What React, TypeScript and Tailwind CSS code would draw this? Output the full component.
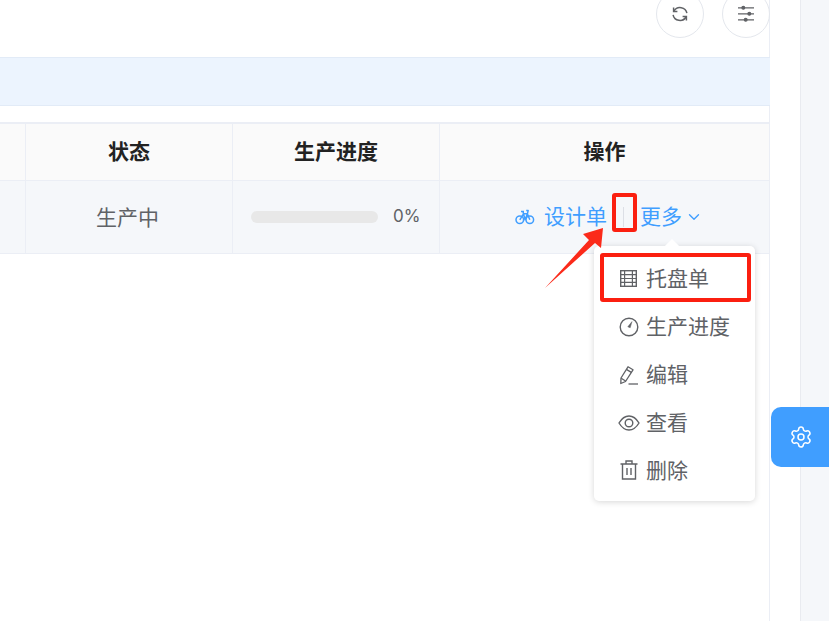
import React from "react";
import { ChevronDown, Settings } from "lucide-react";

const font = { fontFamily: '"Inter","Noto Sans CJK SC",sans-serif' };

function Refresh() {
  return (
    <svg width="18" height="18" viewBox="0 0 18 18" fill="none" stroke="#606266" strokeWidth="1.5">
      <path d="M3 6 A7 7 0 0 1 15.9 8.2" />
      <path d="M2.6 2.6 V6.4 H6.4" />
      <path d="M15 12 A7 7 0 0 1 2.1 9.8" />
      <path d="M15.4 15.4 V11.6 H11.6" />
    </svg>
  );
}
function Sliders() {
  return (
    <svg width="18" height="18" viewBox="0 0 18 18" fill="#606266" stroke="#606266" strokeWidth="1.2">
      <path d="M1 2.8 H17 M1 8.8 H17 M1 14.8 H17" fill="none" />
      <circle cx="6.3" cy="2.8" r="1.4" />
      <circle cx="12.3" cy="8.8" r="1.4" />
      <circle cx="8.7" cy="14.8" r="1.4" />
    </svg>
  );
}
function BikeIcon() {
  return (
    <svg width="20" height="16" viewBox="0 0 20 16" fill="none" stroke="#409eff" strokeWidth="1.5">
      <circle cx="4.8" cy="10.8" r="3.8" />
      <circle cx="14.8" cy="10.8" r="3.8" />
      <path d="M4.8 10.8 L8.5 4.8 L10 10.8 L12.4 4.8 L14.8 10.8 M6 2.6 H9 M8 2.6 L8.5 4.8 M11.2 1.4 H13.2 L12.4 4.8 M8.5 4.8 H12.4" strokeLinejoin="round" />
    </svg>
  );
}
function Gauge() {
  return (
    <svg width="20" height="20" viewBox="0 0 20 20" fill="none" stroke="#606266">
      <circle cx="10" cy="10" r="8.8" strokeWidth="1.4" />
      <path d="M13 4.6 L11.2 10.8 L8.8 9.8 Z" fill="#606266" strokeWidth="0.5" />
    </svg>
  );
}
function Pallet() {
  return (
    <svg width="17" height="17" viewBox="0 0 17 17" fill="none" stroke="#606266" strokeWidth="1.4" className="-mt-[2px]">
      <rect x="0.7" y="0.7" width="15.6" height="15.6" />
      <path d="M4.6 1v15M12.4 1v15M1 4.7h15M1 8.5h15M1 12.3h15" strokeWidth="1.2" />
    </svg>
  );
}
function Pen() {
  return (
    <svg width="18" height="19" viewBox="0 0 18 19" fill="none" stroke="#606266" strokeWidth="1.3">
      <path d="M8 0.8 L13 3.8 L5.5 15.5 L0.8 17.5 L1 12 Z" strokeLinejoin="round" />
      <path d="M6.4 3.4 L11.3 6.4 M1.2 12.2 L5.6 15" />
      <path d="M8.5 18 H18" />
    </svg>
  );
}
function EyeIcon() {
  return (
    <svg width="22" height="16" viewBox="0 0 22 16" fill="none" stroke="#606266" strokeWidth="1.4">
      <path d="M1 8 C4 3 7.5 1 11 1 C14.5 1 18 3 21 8 C18 13 14.5 15 11 15 C7.5 15 4 13 1 8 Z" />
      <circle cx="11" cy="8" r="3.8" />
    </svg>
  );
}
function Trash() {
  return (
    <svg width="18" height="20" viewBox="0 0 18 20" fill="none" stroke="#606266" strokeWidth="1.4" className="-mt-[2px]">
      <path d="M0.5 4 H17.5 M6 4 V1 H12 V4 M2.5 4 V19 H15.5 V4 M7 8 V15 M11 8 V15" />
    </svg>
  );
}

function MenuItem({ icon, label }: { icon: React.ReactNode; label: string }) {
  return (
    <div className="flex h-12 items-center text-[21px] text-[#606266]">
      <span className="flex w-[52px] shrink-0 items-center justify-center pl-[18px] pr-[1px]">{icon}</span>
      <span>{label}</span>
    </div>
  );
}

export default function App() {
  return (
    <div className="relative flex h-[621px] w-[829px] overflow-hidden bg-white" style={font}>
      <main className="flex h-full w-[770px] shrink-0 flex-col border-r border-[#ebeef5]">
        <div className="mt-[-10px] mr-[-1px] flex justify-end gap-[18px]">
          <button className="flex h-12 w-12 items-center justify-center rounded-full border border-[#e4e7ed]">
            <Refresh />
          </button>
          <button className="flex h-12 w-12 items-center justify-center rounded-full border border-[#e4e7ed]">
            <Sliders />
          </button>
        </div>
        <div className="mt-[19px] mr-[-1px] h-[49px] border-y border-[#e2ebf7] bg-[#ecf4fe]" />
        <div className="mt-4 mr-[-1px] border-t-2 border-[#ebeef5]">
          <div className="grid h-[57px] grid-cols-[26px_207px_207px_1fr] border-b border-[#ebeef5] bg-[#fafafa] text-[21px] font-bold text-[#222222]">
            <div className="border-r border-[#ebeef5]" />
            <div className="flex items-center justify-center border-r border-[#ebeef5]">状态</div>
            <div className="flex items-center justify-center border-r border-[#ebeef5]">生产进度</div>
            <div className="flex items-center justify-center border-r border-[#ebeef5]">操作</div>
          </div>
          <div className="grid h-[73px] grid-cols-[26px_207px_207px_1fr] border-b border-[#ebeef5] bg-[#f5f7fa] text-[#606266]">
            <div className="border-r border-[#ebeef5]" />
            <div className="flex items-center justify-center border-r border-[#ebeef5] pr-[3px] pt-px text-[21px]">生产中</div>
            <div className="flex items-center border-r border-[#ebeef5] pl-[18px]">
              <div className="h-3 w-[127px] rounded-full bg-[#e8e8e8]" />
              <span className="ml-[15px] text-[17px]">0%</span>
            </div>
            <div className="flex items-center border-r border-[#ebeef5] pl-[75px] text-[21px] text-[#409eff]">
              <BikeIcon />
              <span className="ml-[9px]">设计单</span>
              <span className="mx-[16px] h-[20px] w-px bg-[#dcdfe6]" />
              <span>更多</span>
              <ChevronDown size={18} strokeWidth={1.8} className="ml-[3px]" />
            </div>
          </div>
        </div>
      </main>
      <div className="w-[30px] shrink-0" />
      <aside className="h-full flex-1 border-l border-[#e9ebf0] bg-[#f5f7fa]" />

      {/* dropdown */}
      <div className="absolute left-[594px] top-[246px] h-[255px] w-[161px] rounded-[5px] bg-white py-[9px] shadow-[0_1px_6px_rgba(0,0,0,0.16)]">
        <div className="absolute left-[73px] top-[-5px] h-[10px] w-[10px] rotate-45 bg-white" />
        <MenuItem icon={<Pallet />} label="托盘单" />
        <MenuItem icon={<Gauge />} label="生产进度" />
        <MenuItem icon={<Pen />} label="编辑" />
        <MenuItem icon={<EyeIcon />} label="查看" />
        <MenuItem icon={<Trash />} label="删除" />
      </div>

      {/* annotations */}
      <div className="absolute left-[612px] top-[193px] h-[39px] w-[25px] rounded-[3px] border-[4px] border-[#fb1f10]" />
      <div className="absolute left-[600px] top-[253px] h-[49px] w-[151px] rounded-[3px] border-[4px] border-[#fb1f10]" />
      <svg className="absolute left-[540px] top-[222px]" width="70" height="70" viewBox="0 0 70 70">
        <path d="M5 66 L49 18 L43 12 L63 6 L61 26 L55 21 Z" fill="#fb2a1a" />
      </svg>

      {/* gear */}
      <button className="absolute left-[771px] top-[407px] flex h-[60px] w-[58px] items-center justify-center rounded-l-[10px] bg-[#409eff] pl-[2px] text-white">
        <Settings size={24} strokeWidth={1.5} />
      </button>
    </div>
  );
}
